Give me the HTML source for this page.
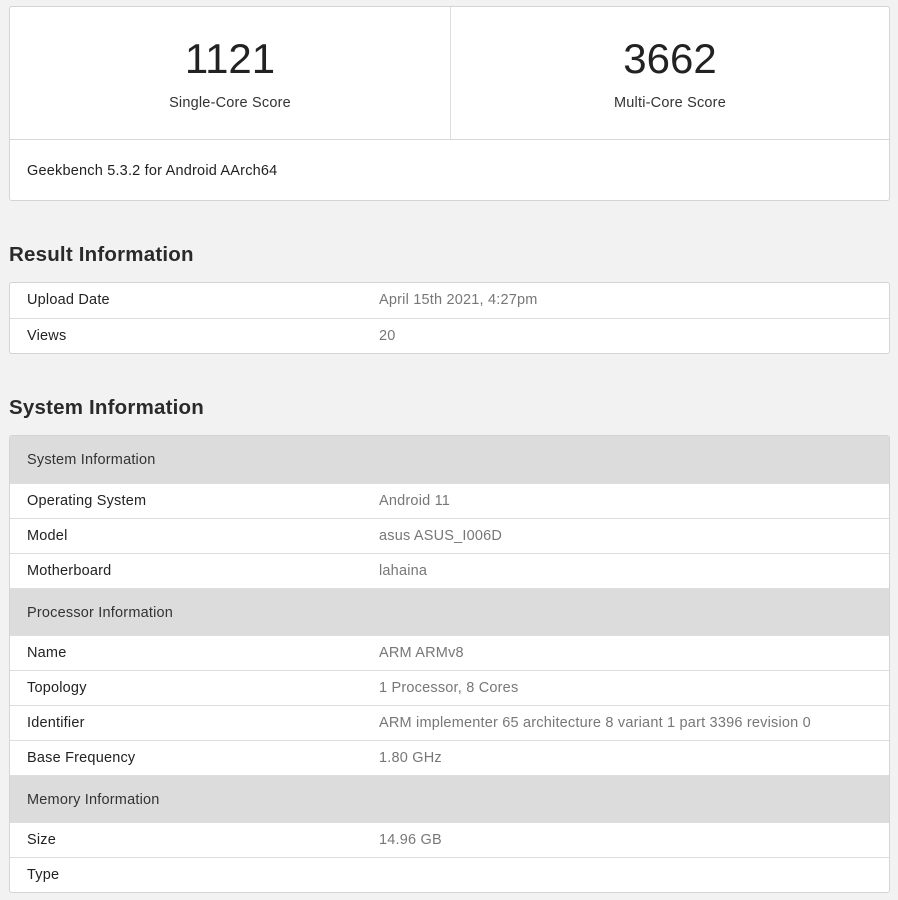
<!DOCTYPE html>
<html><head><meta charset="utf-8"><style>
*{box-sizing:border-box;margin:0;padding:0}
body{width:898px;height:900px;background:#f2f2f2;font-family:"Liberation Sans",sans-serif;color:#222;position:relative;overflow:hidden}
.card{position:absolute;left:9px;width:881px;background:#fff;border:1px solid #d4d4d4;border-radius:3px;overflow:hidden}
.score{position:absolute;top:0;width:440px;height:133px;text-align:center}
.score .n{position:absolute;top:28px;width:100%;font-size:42px;color:#222}
.score .l{position:absolute;top:88px;width:100%;font-size:14.5px;color:#333;letter-spacing:0.2px}
h2{position:absolute;left:9px;font-size:20.5px;font-weight:bold;color:#2a2a2a;letter-spacing:0.2px}
.row{height:35px;border-top:1px solid #dedede;position:relative;font-size:14.5px;letter-spacing:0.2px}
.row:first-child{border-top:none}
.row .k{position:absolute;left:17px;top:9px;color:#222}
.row .v{position:absolute;left:369px;top:9px;color:#777}
.hd{height:47px;background:#dcdcdc;position:relative;font-size:14.5px;border-top:1px solid #dedede;letter-spacing:0.2px}
.hd:first-child{border-top:none;height:47px}
.hd span{position:absolute;left:17px;top:16px;color:#333}
</style></head><body>
<div class="card" style="top:6px;height:195px">
<div class="score" style="left:0"><div class="n">1121</div><div class="l">Single-Core Score</div></div>
<div style="position:absolute;left:440px;top:0;width:1px;height:133px;background:#dedede"></div>
<div class="score" style="left:440px"><div class="n">3662</div><div class="l">Multi-Core Score</div></div>
<div style="position:absolute;left:0;top:132px;width:100%;height:1px;background:#d8d8d8"></div>
<div style="position:absolute;left:17px;top:156px;font-size:14.5px;color:#222;letter-spacing:0.2px">Geekbench 5.3.2 for Android AArch64</div>
</div>
<h2 style="top:243px">Result Information</h2>
<div class="card" style="top:282px">
<div class="row"><span class="k">Upload Date</span><span class="v">April 15th 2021, 4:27pm</span></div>
<div class="row"><span class="k">Views</span><span class="v">20</span></div>
</div>
<h2 style="top:396px">System Information</h2>
<div class="card" style="top:435px">
<div class="hd"><span>System Information</span></div>
<div class="row"><span class="k">Operating System</span><span class="v">Android 11</span></div>
<div class="row"><span class="k">Model</span><span class="v">asus ASUS_I006D</span></div>
<div class="row"><span class="k">Motherboard</span><span class="v">lahaina</span></div>
<div class="hd"><span>Processor Information</span></div>
<div class="row"><span class="k">Name</span><span class="v">ARM ARMv8</span></div>
<div class="row"><span class="k">Topology</span><span class="v">1 Processor, 8 Cores</span></div>
<div class="row"><span class="k">Identifier</span><span class="v">ARM implementer 65 architecture 8 variant 1 part 3396 revision 0</span></div>
<div class="row"><span class="k">Base Frequency</span><span class="v">1.80 GHz</span></div>
<div class="hd"><span>Memory Information</span></div>
<div class="row"><span class="k">Size</span><span class="v">14.96 GB</span></div>
<div class="row"><span class="k">Type</span><span class="v"></span></div>
</div>
</body></html>
